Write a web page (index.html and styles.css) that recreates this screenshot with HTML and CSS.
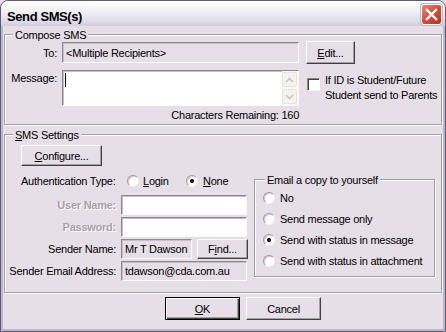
FILE: index.html
```html
<!DOCTYPE html>
<html lang="en">
<head>
    <meta charset="UTF-8">
    <title>Send SMS(s)</title>
    <link rel="stylesheet" href="styles.css">
</head>
<body>
    <div class="window">
        <div class="titlebar">
            <span class="title">Send SMS(s)</span>
            <span class="close">
                <svg width="13" height="13" viewBox="0 0 13 13"><path d="M2 2 L11 11 M11 2 L2 11" stroke="#fff" stroke-width="2.4" stroke-linecap="square"/></svg>
            </span>
        </div>

        <div class="client">
            <!-- compose -->
            <div class="group compose">
                <div class="group-title">Compose SMS</div>
                <div class="to-row">
                    <span class="lbl">To:</span>
                    <div class="field readonly to-field">&lt;Multiple Recipients&gt;</div>
                    <div class="btn edit-btn"><u>E</u>dit...</div>
                </div>
                <div class="msg-row">
                    <span class="lbl msg-lbl">Message:</span>
                    <div class="field memo">
                        <span class="caret"></span>
                        <div class="vscroll">
                            <span class="sbtn"><svg width="9" height="6" viewBox="0 0 9 6"><path d="M1 5 L4.5 1.5 L8 5" fill="none" stroke="#c9c7bd" stroke-width="1.6"/></svg></span>
                            <span class="sbtn"><svg width="9" height="6" viewBox="0 0 9 6"><path d="M1 1 L4.5 4.5 L8 1" fill="none" stroke="#c9c7bd" stroke-width="1.6"/></svg></span>
                        </div>
                    </div>
                    <span class="check"></span>
                    <span class="check-lbl">If ID is Student/Future<br>Student send to Parents</span>
                </div>
                <div class="chars">Characters Remaining: 160</div>
            </div>

            <!-- settings -->
            <div class="group settings">
                <div class="group-title"><u>S</u>MS Settings</div>
                <div class="btn configure-btn"><u>C</u>onfigure...</div>
                <div class="lower">
                    <div class="left-col">
                        <div class="auth-row">
                            <span class="auth-lbl">Authentication Type:</span>
                            <span class="radio"></span>
                            <span class="opt-login"><u>L</u>ogin</span>
                            <span class="radio on"></span>
                            <span class="opt-none"><u>N</u>one</span>
                        </div>
                        <div class="fields">
                            <div class="frow">
                                <span class="flbl disabled">User Name:</span>
                                <div class="field wide"></div>
                            </div>
                            <div class="frow">
                                <span class="flbl disabled">Password:</span>
                                <div class="field wide"></div>
                            </div>
                            <div class="frow">
                                <span class="flbl">Sender Name:</span>
                                <div class="field readonly narrow">Mr T Dawson</div>
                                <div class="btn find-btn">F<u>i</u>nd...</div>
                            </div>
                            <div class="frow">
                                <span class="flbl">Sender Email Address:</span>
                                <div class="field readonly wide">tdawson@cda.com.au</div>
                            </div>
                        </div>
                    </div>
                    <div class="group email">
                        <div class="group-title">Email a copy to yourself</div>
                        <div class="rrow"><span class="radio"></span><span class="rlbl">No</span></div>
                        <div class="rrow"><span class="radio"></span><span class="rlbl">Send message only</span></div>
                        <div class="rrow"><span class="radio on"></span><span class="rlbl">Send with status in message</span></div>
                        <div class="rrow"><span class="radio"></span><span class="rlbl">Send with status in attachment</span></div>
                    </div>
                </div>
            </div>

            <div class="buttons">
                <div class="btn default"><u>O</u>K</div>
                <div class="btn cancel-btn">Cancel</div>
            </div>
        </div>
    </div>
</body>
</html>
```

FILE: styles.css
```css
* { margin: 0; padding: 0; box-sizing: border-box; }
:root {
    --face: #e7dfe7; --shadow: #a59ea5; --dark: #404040;
    --light: #ffffff; --grey-text: #a8a1a8;
}
body {
    font-family: "Liberation Sans", Arial, sans-serif;
    font-size: 11px; letter-spacing: -0.25px; color: #000;
    background: var(--face); white-space: nowrap;
}
.window {
    width: 446px; height: 332px;
    border: 1px solid #5c5a78; border-radius: 8px 8px 0 0;
    background: #b9b7c9; display: flex; flex-direction: column;
    overflow: hidden;
}

/* title bar */
.titlebar {
    height: 25px; flex: none;
    display: flex; justify-content: space-between; align-items: flex-start;
    padding: 0 3px 0 6px;
    background: linear-gradient(#ffffff, #f3f3f7 35%, #e1e0ea 75%, #cfcedc);
}
.title {
    margin-top: 8px; font-size: 13px; font-weight: bold;
    line-height: 16px; letter-spacing: -0.4px; color: #000;
}
.close {
    margin-top: 3px; width: 21px; height: 21px;
    border: 1px solid #fff; border-radius: 3px;
    background: linear-gradient(135deg, #e58a7c, #cc4b3a 55%, #b5382a);
    box-shadow: 0 0 0 1px #c4b6c2;
    display: flex; align-items: center; justify-content: center;
}

/* client area */
.client {
    flex: 1; margin: 0 2px 2px 2px;
    background: var(--face); display: flex; flex-direction: column;
}
.group {
    display: flex; flex-direction: column;
    border: 1px solid var(--shadow);
    box-shadow: inset 1px 1px var(--light), 1px 1px var(--light);
}
.group-title {
    margin: -6px 0 0 8px; padding: 0 2px; line-height: 13px;
    background: var(--face); align-self: flex-start;
}
.compose { margin: 8px 1px 0 1px; padding-bottom: 2px; }
.settings { margin: 9px 1px 0 1px; padding-bottom: 11px; }

/* common controls */
.field {
    background: #fff; line-height: 15px; padding: 2px 0 0 3px;
    border: 1px solid; border-color: #8d878d #fbfbfb #fbfbfb #8d878d;
    box-shadow: inset 1px 1px #c7c0c7;
    overflow: hidden;
}
.field.readonly { background: var(--face); }
.btn {
    display: flex; align-items: center; justify-content: center;
    background: var(--face);
    border: 1px solid; border-color: var(--light) var(--dark) var(--dark) var(--light);
    box-shadow: inset -1px -1px var(--shadow);
}
.btn.default {
    border: 1px solid #000;
    box-shadow: inset 1px 1px var(--light), inset -1px -1px var(--dark), inset -2px -2px var(--shadow);
}
.lbl { width: 52px; text-align: right; flex: none; }

/* compose rows */
.to-row { display: flex; align-items: center; height: 23px; margin-top: -1px; }
.to-field { margin-left: 5px; width: 237px; height: 21px; padding-top: 3px; }
.edit-btn { margin-left: 7px; width: 49px; height: 23px; }
.msg-row { display: flex; align-items: flex-start; height: 36px; margin-top: 6px; }
.msg-lbl { padding-top: 2px; }
.memo {
    margin-left: 5px; width: 237px; height: 36px; padding: 0;
    display: flex; justify-content: space-between;
}
.caret { width: 1px; height: 14px; margin: 2px 0 0 2px; background: #000; }
.vscroll {
    width: 16px; display: flex; flex-direction: column;
    justify-content: space-between; padding: 1px 0 1px;
    background: #faf9f6;
}
.sbtn {
    width: 15px; height: 15px; border: 1px solid #e6e3dc; border-radius: 2px;
    background: #f4f3ee; display: flex; align-items: center; justify-content: center;
}
.check {
    margin: 8px 0 0 8px; width: 13px; height: 13px; flex: none; background: #fff;
    border: 1px solid; border-color: #8d878d #fbfbfb #fbfbfb #8d878d;
    box-shadow: inset 1px 1px var(--dark);
}
.check-lbl { margin: 3px 0 0 5px; line-height: 15px; }
.chars { margin-top: 3px; width: 294px; text-align: right; line-height: 13px; }

/* settings */
.configure-btn { margin: 3px 0 0 16px; width: 81px; height: 21px; }
.lower { display: flex; margin-top: 7px; }
.left-col { width: 249px; flex: none; }
.auth-row { display: flex; align-items: center; height: 15px; padding-left: 16px; }
.auth-lbl { width: 106px; }
.opt-login { margin-left: 4px; width: 43px; }
.opt-none { margin-left: 5px; }
.radio {
    width: 12px; height: 12px; flex: none; border-radius: 50%;
    background: #fff;
    border: 1px solid; border-color: #a19ba1 #f4f2f4 #f4f2f4 #a19ba1;
    box-shadow: inset 1px 1px #d4cfd4;
    display: flex; align-items: center; justify-content: center;
}
.radio.on::after {
    content: ""; width: 4px; height: 4px; border-radius: 50%; background: #000;
}
.fields { margin-top: 7px; display: flex; flex-direction: column; gap: 2px; }
.frow { display: flex; align-items: center; height: 20px; }
.flbl { width: 111px; text-align: right; flex: none; }
.flbl.disabled { color: var(--grey-text); font-weight: bold; text-shadow: 1px 1px #fff; }
.frow .field { margin-left: 5px; height: 20px; }
.field.wide { width: 126px; }
.field.narrow { width: 71px; }
.find-btn { margin-left: 5px; width: 51px; height: 20px; }

.email { width: 181px; margin-top: 6px; padding-bottom: 5px; align-self: flex-start; }
.email .group-title { margin-left: 10px; }
.rrow { display: flex; align-items: center; height: 21px; padding-left: 8px; }
.rrow:first-of-type { margin-top: 1px; }
.rlbl { margin-left: 5px; }

/* dialog buttons */
.buttons { display: flex; margin-top: 4px; padding-left: 162px; }
.buttons .btn { width: 75px; height: 23px; }
.cancel-btn { margin-left: 6px; }
```
